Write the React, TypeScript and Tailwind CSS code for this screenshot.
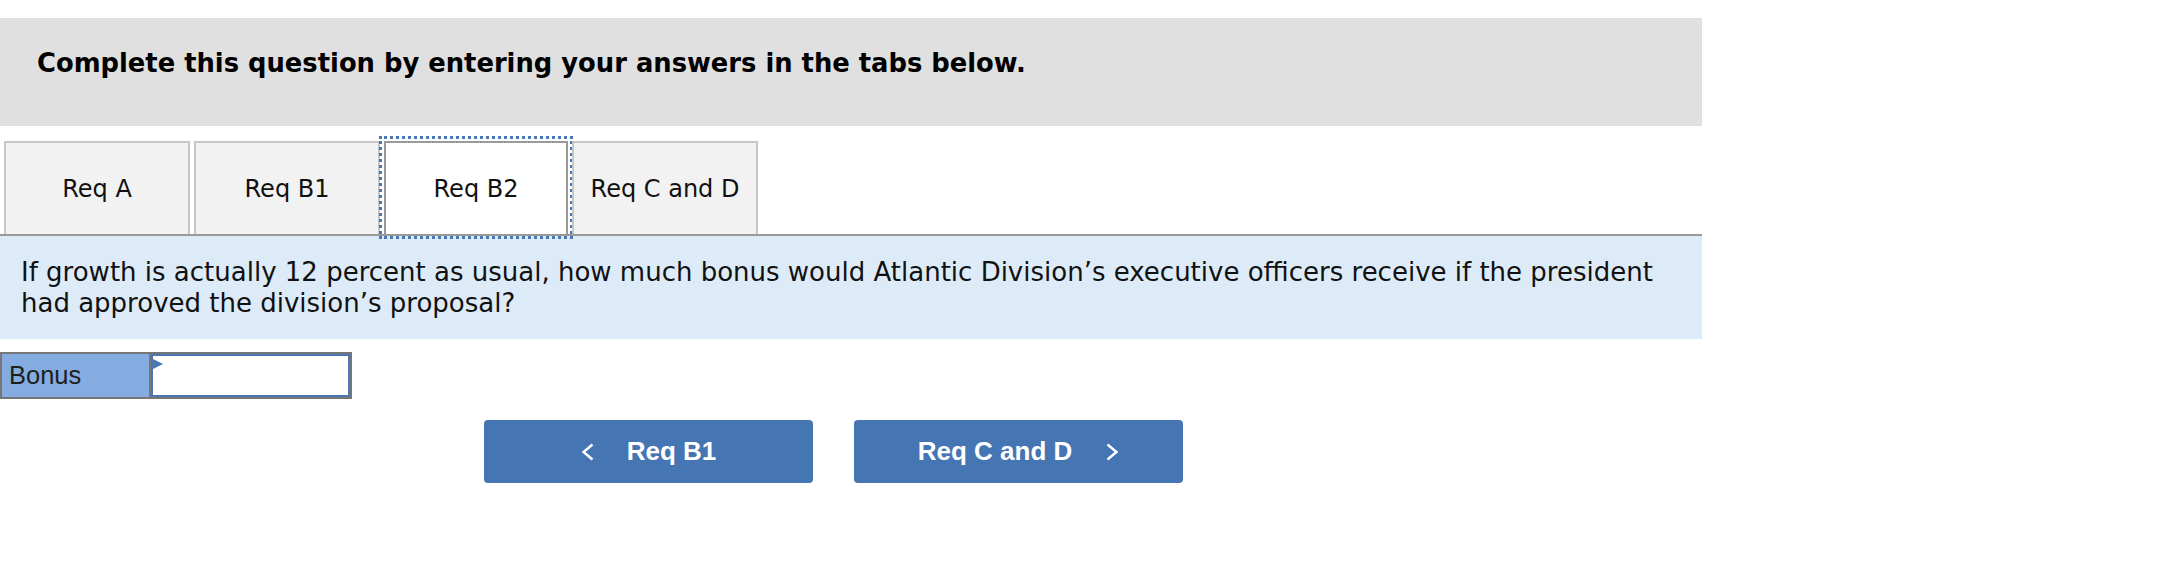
const tabs = ['Req A', 'Req B1', 'Req B2', 'Req C and D'];
const activeTab = 'Req B2';

const verdana = { fontFamily: '"DejaVu Sans", Verdana, sans-serif' };
const arial = { fontFamily: '"Liberation Sans", Arial, sans-serif' };

function Chevron({ dir }: { dir: 'left' | 'right' }) {
  return (
    <svg width="14" height="18" viewBox="0 0 14 18" fill="none">
      <polyline
        points={dir === 'left' ? '11.5,1.5 2.5,9 11.5,16.5' : '2.5,1.5 11.5,9 2.5,16.5'}
        stroke="white"
        strokeWidth="2.4"
      />
    </svg>
  );
}

function Tab({ label, active }: { label: string; active: boolean }) {
  return (
    <div
      className={
        active
          ? 'flex h-[93px] w-[184px] items-center justify-center border-2 border-b-0 border-[#9a9a9a] bg-white text-[24px] text-[#111] outline-[3px] outline-offset-[2px] outline-dotted outline-[#4a77b8]'
          : 'flex h-[93px] w-[186px] items-center justify-center border-2 border-b-0 border-[#c6c6c6] bg-[#f2f2f2] text-[24px] text-[#111]'
      }
    >
      {label}
    </div>
  );
}

export default function App() {
  return (
    <div className="h-[570px] w-[2164px] bg-white" style={verdana}>
      <div className="w-[1702px] pt-[18px]">
        <div className="h-[108px] bg-[#e0e0e0] pl-[37px] pt-[30px]">
          <h2 className="text-[25.8px] leading-[30px] font-bold text-black">
            Complete this question by entering your answers in the tabs below.
          </h2>
        </div>

        <div className="mt-[15px] flex gap-[4px] border-b-2 border-[#999] pl-[4px]">
          {tabs.map((t) => (
            <Tab key={t} label={t} active={t === activeTab} />
          ))}
        </div>

        <div className="bg-[#ddebf8] px-[21px] pt-[21px] pb-[20px] text-[26px] leading-[31px] whitespace-nowrap text-[#111]">
          If growth is actually 12 percent as usual, how much bonus would Atlantic Division’s executive officers receive if the president
          <br />
          had approved the division’s proposal?
        </div>
      </div>

      <div className="mt-[13px] flex h-[47px] w-[352px] border-2 border-[#767676]" style={arial}>
        <div className="flex w-[149px] items-center border-r-2 border-[#767676] bg-[#84ace0] pl-[7px] text-[25.5px] text-[#1e1e1e]">
          Bonus
        </div>
        <div className="relative flex-1 border-2 border-[#4a76b3] bg-white">
          <svg className="absolute top-[3px] left-0" width="11" height="11" viewBox="0 0 11 11">
            <polygon points="0,0 10,5 0,10" fill="#4a76b3" />
          </svg>
        </div>
      </div>

      <div className="mt-[21px] ml-[484px] flex gap-[41px]" style={arial}>
        <button className="flex h-[63px] w-[329px] items-center justify-center gap-[32px] rounded-[4px] bg-[#4675b3] text-[26px] font-bold text-white">
          <Chevron dir="left" />
          <span>Req B1</span>
        </button>
        <button className="flex h-[63px] w-[329px] items-center justify-center gap-[33px] rounded-[4px] bg-[#4675b3] text-[26px] font-bold text-white">
          <span>Req C and D</span>
          <Chevron dir="right" />
        </button>
      </div>
    </div>
  );
}
